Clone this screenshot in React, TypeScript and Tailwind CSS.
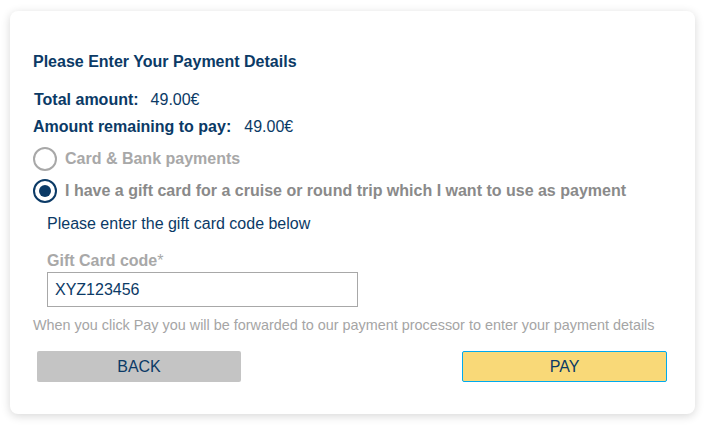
export default function App() {
  return (
    <main className="min-h-screen bg-white pt-[11px] pl-[10px] font-['Liberation_Sans',Arial,sans-serif]">
      <div className="w-[685px] h-[403px] bg-white rounded-[8px] shadow-[0_2px_10px_rgba(0,0,0,0.16)] pt-[40px] px-[23px] text-[#0b3a66]">
        {/* Header */}
        <h1 className="h-[22px] flex items-center text-[16px] font-bold">Please Enter Your Payment Details</h1>

        <div className="mt-[16px] h-[22px] flex items-center text-[16px]">
          <span className="font-bold ml-px">Total amount:</span>
          <span className="ml-[12px]">49.00€</span>
        </div>
        <div className="mt-[5px] h-[22px] flex items-center text-[16px]">
          <span className="font-bold">Amount remaining to pay:</span>
          <span className="ml-[13px]">49.00€</span>
        </div>

        {/* Payment options */}
        <div className="mt-[5px]">
          <label className="h-[32px] flex items-center gap-[8px]">
            <span className="w-[24px] h-[24px] rounded-full border-2 border-[#a8a8a8] bg-white" />
            <span className="text-[16px] font-bold text-[#a8a8a8]">Card &amp; Bank payments</span>
          </label>
          <label className="h-[32px] flex items-center gap-[8px]">
            <span className="w-[24px] h-[24px] rounded-full border-2 border-[#0b3a66] bg-white flex items-center justify-center">
              <span className="w-[12px] h-[12px] rounded-full bg-[#0b3a66]" />
            </span>
            <span className="text-[16px] font-bold text-[#8a8a8a]">
              I have a gift card for a cruise or round trip which I want to use as payment
            </span>
          </label>
        </div>

        {/* Gift card */}
        <div className="pl-[14px]">
          <p className="mt-[6px] h-[22px] flex items-center text-[16px]">Please enter the gift card code below</p>
          <p className="mt-[15px] h-[22px] flex items-center text-[16px] font-bold text-[#a8a8a8]">
            Gift Card code<span className="font-normal">*</span>
          </p>
          <input
            className="block w-[311px] h-[35px] border border-[#a8a8a8] px-[7px] text-[16px] text-[#0b3a66] outline-none"
            defaultValue="XYZ123456"
          />
        </div>

        <p className="mt-[10px] h-[18px] flex items-center text-[14.4px] text-[#a5a5a5] whitespace-nowrap">
          When you click Pay you will be forwarded to our payment processor to enter your payment details
        </p>

        {/* Actions */}
        <div className="mt-[16px] flex justify-between pl-[4px] pr-[5px]">
          <button className="w-[204px] h-[31px] rounded-[2px] bg-[#c4c4c4] text-[16px] text-[#0b3a66]">BACK</button>
          <button className="w-[205px] h-[31px] rounded-[2px] bg-[#f9d978] border border-[#00aaee] text-[16px] text-[#0b3a66]">
            PAY
          </button>
        </div>
      </div>
    </main>
  );
}
